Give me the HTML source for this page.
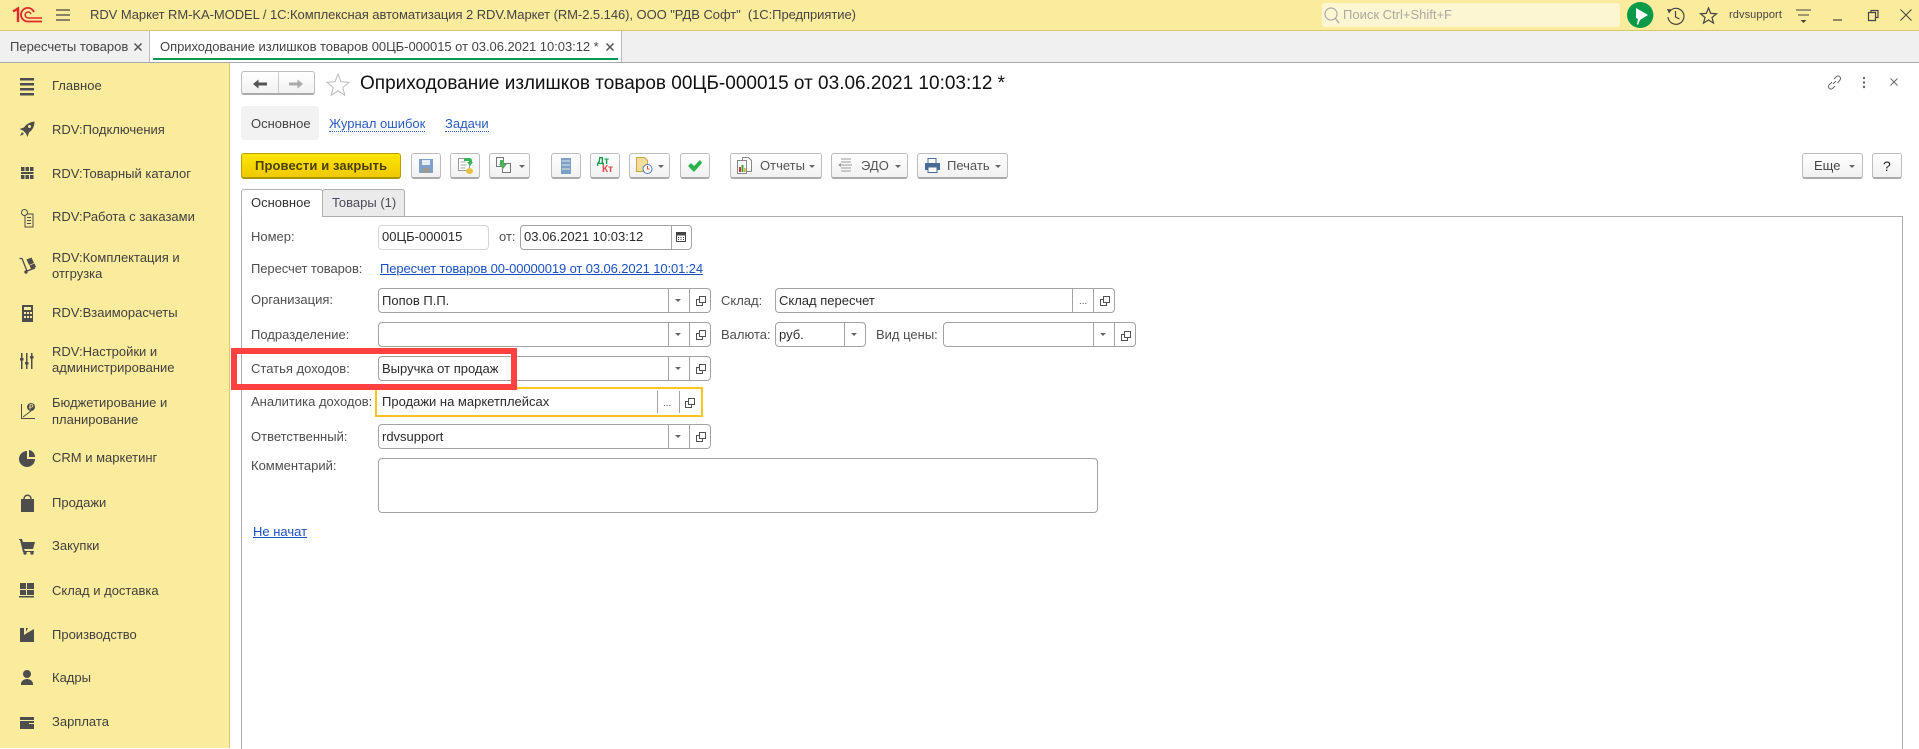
<!DOCTYPE html>
<html lang="ru"><head><meta charset="utf-8"><title>1C</title>
<style>
html,body{margin:0;padding:0;width:1919px;height:748px;overflow:hidden;background:#fff;font-family:"Liberation Sans","Noto Sans CJK SC",sans-serif;font-size:13px;color:#4a4a4a}
.a,.l,.s,.f,.b,.t{position:absolute;white-space:nowrap}
.a,.l,.s,.t{line-height:16px}
.l{left:251px;color:#4e4e4e}
.s{left:52px;color:#3f3f3f}
.f{box-sizing:border-box;height:25px;border:1px solid #a3a3a3;border-radius:4px;background:#fff}
.f i{position:absolute;top:0;bottom:0;width:1px;background:#a3a3a3}
.t{color:#2b2b2b}
.b{box-sizing:border-box;top:153px;height:26px;border:1px solid #bdbdbd;border-bottom:2px solid #aaa;border-radius:3px;background:linear-gradient(#fff,#f1f1f1)}
svg{position:absolute;overflow:visible}
a{color:#1448c4;text-decoration:underline}
</style></head><body>
<svg width="0" height="0" style="left:0;top:0"><defs>
<symbol id="c" viewBox="0 0 10 10" overflow="visible"><path d="M3.500.5h6v6h-6zM3.500 3.500H.5v6h6V6.500" fill="none" stroke="#505050" stroke-width="1"/></symbol>
<symbol id="d" viewBox="0 0 6 3"><path d="M0 0h6L3 3z" fill="#666"/></symbol>
</defs></svg>

<!-- top bar -->
<div class="a" style="left:0;top:0;width:1919px;height:30px;background:#fbec9d"></div>
<div class="a" style="left:0;top:30px;width:1919px;height:1px;background:#d8c869"></div>
<svg style="left:0;top:0" width="45" height="30" fill="none" stroke="#e1292b"><path d="M13 11.500l5-3V22" stroke-width="2.400"/><path d="M34 12a6.800 6.800 0 1 0-6 9.500H42" stroke-width="1.800"/><path d="M31 14a3 3 0 1 0-2.500 4H42" stroke-width="1.500"/></svg>
<svg style="left:56px;top:9px" width="15" height="12"><path d="M0 1h14M0 6h14M0 11h14" stroke="#444" stroke-width="1.2"/></svg>
<div class="a" style="left:90px;top:7px;color:#444;letter-spacing:-.06px">RDV Маркет RM-KA-MODEL / 1С:Комплексная автоматизация 2 RDV.Маркет (RM-2.5.146), ООО "РДВ Софт"&nbsp; (1С:Предприятие)</div>
<div class="a" style="left:1322px;top:3px;width:298px;height:24px;background:#fdf6d3;border-radius:3px"></div>
<svg style="left:1324px;top:7px" width="16" height="17"><circle cx="7" cy="7" r="6" fill="none" stroke="#aaa" stroke-width="1.2"/><path d="M11 11l4 5" stroke="#aaa" stroke-width="1.4"/></svg>
<div class="a" style="left:1343px;top:7px;color:#a9a9a0">Поиск Ctrl+Shift+F</div>
<svg style="left:1627px;top:2px" width="27" height="26"><ellipse cx="13.2" cy="13" rx="13.2" ry="13" fill="#0b9a4a"/><path d="M9 6l12 7-8 5-2 5-1-1 1-5-2-1z" fill="#fff"/></svg>
<svg style="left:1666px;top:6px" width="19" height="19"><path d="M4 5a8 8 0 1 1-2 6M9.5 5v6l4 2" fill="none" stroke="#444" stroke-width="1.2"/><path d="M1 3l5 .5-3 4z" fill="#444"/></svg>
<svg style="left:1700px;top:7px" width="18" height="17"><path d="M8.5 1l2.2 5.4 5.8.4-4.5 3.7 1.5 5.6-5-3.1-5 3.1 1.5-5.6L.5 6.8l5.8-.4z" fill="none" stroke="#444" stroke-width="1.2"/></svg>
<div class="a" style="left:1729px;top:7px;color:#444;font-size:11px;letter-spacing:.1px">rdvsupport</div>
<svg style="left:1796px;top:9px" width="16" height="15"><path d="M0 1h15M2 6h11" stroke="#444" stroke-width="1.1"/><path d="M4.500 11h6l-3 3z" fill="#444"/></svg>
<svg style="left:1833px;top:19px" width="10" height="3"><path d="M0 1h9" stroke="#444" stroke-width="1.2"/></svg>
<svg style="left:1868px;top:10px" width="11" height="11"><path d="M3 2.500V.5h7v7H8M.5 2.500h7v8h-7z" fill="none" stroke="#444" stroke-width="1.200"/></svg>
<svg style="left:1900px;top:9px" width="13" height="13"><path d="M.5.5l11 11M11.500.5l-11 11" stroke="#444" stroke-width="1"/></svg>

<!-- tab bar -->
<div class="a" style="left:0;top:31px;width:1919px;height:31px;background:#f0f0f0"></div>
<div class="a" style="left:0;top:62px;width:1919px;height:1px;background:#a8a8a8"></div>
<div class="a" style="left:150px;top:31px;width:471px;height:31px;background:#fff"></div>
<div class="a" style="left:149px;top:31px;width:1px;height:31px;background:#bbb"></div>
<div class="a" style="left:621px;top:31px;width:1px;height:31px;background:#bbb"></div>
<div class="a" style="left:153px;top:58px;width:465px;height:2px;background:#089a53"></div>
<div class="a" style="left:10px;top:39px;color:#444">Пересчеты товаров</div>
<svg style="left:134px;top:43px" width="8" height="8"><path d="M.5.5l7 7M7.500.5l-7 7" stroke="#555" stroke-width="1.500"/></svg>
<div class="a" style="left:160px;top:39px;color:#444;letter-spacing:-.04px">Оприходование излишков товаров 00ЦБ-000015 от 03.06.2021 10:03:12 *</div>
<svg style="left:606px;top:43px" width="8" height="8"><path d="M.5.5l7 7M7.500.5l-7 7" stroke="#555" stroke-width="1.500"/></svg>

<!-- sidebar -->
<div class="a" style="left:0;top:63px;width:229px;height:685px;background:#fbec9d;border-right:1px solid #d6c777"></div>
<div class="s" style="top:78px">Главное</div>
<div class="s" style="top:122px">RDV:Подключения</div>
<div class="s" style="top:166px">RDV:Товарный каталог</div>
<div class="s" style="top:209px">RDV:Работа с заказами</div>
<div class="s" style="top:250px">RDV:Комплектация и</div>
<div class="s" style="top:266px">отгрузка</div>
<div class="s" style="top:305px">RDV:Взаиморасчеты</div>
<div class="s" style="top:344px">RDV:Настройки и</div>
<div class="s" style="top:360px">администрирование</div>
<div class="s" style="top:395px">Бюджетирование и</div>
<div class="s" style="top:412px">планирование</div>
<div class="s" style="top:450px">CRM и маркетинг</div>
<div class="s" style="top:495px">Продажи</div>
<div class="s" style="top:538px">Закупки</div>
<div class="s" style="top:583px">Склад и доставка</div>
<div class="s" style="top:627px">Производство</div>
<div class="s" style="top:670px">Кадры</div>
<div class="s" style="top:714px">Зарплата</div>

<svg style="left:0;top:0" width="60" height="748" fill="#4d4d4d">
<path d="M20 78h14v2.500H20zM20 83h14v2.500H20zM20 88h14v2.500H20zM20 93h14v2.500H20z"/>
<path d="M34.500 121.500c-5 .5-8.500 3-10.500 6l-4.500 1.500 3.500 1.500 3 3 1.500 3.500 1.500-4.500c3-2 5.500-5.500 5.500-11zM22 132l2 2-4 2z"/><circle cx="29.500" cy="126.500" r="1.500" fill="#fbec9d"/>
<path d="M21 167h3.500v4H21zM25.500 167h3.500v4h-3.500zM30 167h3.500v4H30zM21 172h12.500v2H21zM21 175h3.500v4H21zM25.500 175h3.500v4h-3.500zM30 175h3.500v4H30z"/>
<path d="M25 214h8v13h-8z" fill="none" stroke="#4d4d4d"/><circle cx="24.500" cy="212.500" r="3" fill="#fbec9d" stroke="#4d4d4d"/><path d="M27 217h4v1h-4zM27 220h4v1h-4zM27 223h4v1h-4z"/>
<path d="M19.500 258.500h2.500l5 12.500 8-3" fill="none" stroke="#4d4d4d" stroke-width="1.300"/><path d="M26.500 259.500l5-2 2.500 5.500-5 2zM29.500 265.500l5-2 1.500 3.500-5 2z"/><circle cx="26" cy="272" r="1.700"/>
<path d="M22 305h11v17H22zM24 307v3h7v-3zM24 312v2h2v-2zM27 312v2h2v-2zM30 312v2h2v-2zM24 316v2h2v-2zM27 316v2h2v-2zM30 316v2h2v-2z" fill-rule="evenodd"/>
<path d="M21 353h1.500v16H21zM20 358h3.500v2.500H20zM26 353h1.500v16H26zM25 362h3.500v2.500H25zM31 353h1.500v16H31zM30 356h3.500v2.500H30z"/>
<path d="M21 404h1v14h13v1H21z"/><path d="M23 417l8-6" stroke="#4d4d4d" fill="none"/><circle cx="31" cy="407" r="4"/><path d="M30 409.500v-5h1.500a1.300 1.300 0 0 1 0 2.600H29" fill="none" stroke="#fbec9d" stroke-width=".8"/>
<path d="M27 451a8 8 0 1 0 8 8h-8z"/><path d="M29 450a7 7 0 0 1 6 7h-6z"/>
<path d="M21 499h13v13H21z"/><path d="M24 499c0-5 7-5 7 0" fill="none" stroke="#4d4d4d" stroke-width="1.500"/>
<path d="M19 539h3l1 3h12l-2 7H24l1 2h9v1H23l-3-12h-1z"/><circle cx="25" cy="553" r="1.700"/><circle cx="32" cy="553" r="1.700"/>
<path d="M20 583h6v6h-6zM27 583h7v6h-7zM20 590h6v5h-6zM27 590h7v5h-7zM19 596h15v1.500H19z"/>
<path d="M20 628h4v7l3-2 7-4v13H20z"/><path d="M26 628h2l-2 4z"/>
<circle cx="27" cy="674" r="4"/><path d="M21 684c0-3 3-5 6-5s6 2 6 5H21z"/><path d="M21 684h12v1H21z"/>
<path d="M20 717h14v3H20zM20 721h14v8H20z"/><path d="M29 723h5v1h-5z" fill="#fbec9d"/>
</svg>

<!-- form head -->
<div class="a" style="left:241px;top:71px;width:74px;height:24px;box-sizing:border-box;border:1px solid #bdbdbd;border-bottom:2px solid #aaa;border-radius:3px;background:linear-gradient(#fff,#f1f1f1)"></div>
<div class="a" style="left:278px;top:72px;width:1px;height:21px;background:#ccc"></div>
<svg style="left:253px;top:79px" width="15" height="10"><path d="M0 5l5.500-4.500v3H14v3H5.500v3z" fill="#555"/></svg>
<svg style="left:289px;top:79px" width="15" height="10"><path d="M14 5L8.500.5v3H0v3h8.500v3z" fill="#aaa"/></svg>
<svg style="left:326px;top:73px" width="24" height="22"><path d="M12 1l3 7.800 8 .5-6.200 5.200 2 7.800-6.800-4.400-6.800 4.400 2-7.800L1 9.300l8-.5z" fill="#fff" stroke="#bbb"/></svg>
<div class="a" style="left:360px;top:74px;font-size:19px;line-height:20px;color:#111">Оприходование излишков товаров 00ЦБ-000015 от 03.06.2021 10:03:12 *</div>
<svg style="left:1827px;top:75px" width="15" height="15"><path d="M6 9l3-3M5 7l-3 3a2.500 2.500 0 0 0 3.500 3.500L8 11M7 4l2.500-2.500A2.500 2.500 0 0 1 13 5l-2.500 3" fill="none" stroke="#666" stroke-width="1"/></svg>
<svg style="left:1862px;top:76px" width="4" height="13" fill="#666"><circle cx="2" cy="2" r="1.200"/><circle cx="2" cy="6.500" r="1.200"/><circle cx="2" cy="11" r="1.200"/></svg>
<svg style="left:1890px;top:78px" width="8" height="8"><path d="M.5.5l7 7M7.500.5l-7 7" stroke="#666" stroke-width="1"/></svg>

<div class="a" style="left:241px;top:106px;width:78px;height:34px;background:#f2f2f2;border-radius:3px"></div>
<div class="a" style="left:251px;top:116px;color:#444">Основное</div>
<div class="a" style="left:329px;top:116px;color:#2a5ac0;border-bottom:1px dotted #2a5ac0;line-height:15px">Журнал ошибок</div>
<div class="a" style="left:445px;top:116px;color:#2a5ac0;border-bottom:1px dotted #2a5ac0;line-height:15px">Задачи</div>

<!-- toolbar -->
<div class="b" style="left:241px;width:160px;background:linear-gradient(#ffe600,#f0c800);border:1px solid #b5a000;border-bottom:2px solid #a8950a"></div>
<div class="a" style="left:255px;top:158px;font-weight:bold;color:#4a4200;letter-spacing:.1px">Провести и закрыть</div>
<div class="b" style="left:411px;width:30px"></div>
<svg style="left:419px;top:159px" width="14" height="14"><path d="M0 0h14v14H0z" fill="#7ea1c9"/><path d="M3 1h8v5H3z" fill="#e6edf5"/><path d="M3 9h8v5H3z" fill="#9a9a9a"/></svg>
<div class="b" style="left:450px;width:30px"></div>
<svg style="left:458px;top:158px" width="15" height="16"><path d="M.5.5h8l3 3v9H.5z" fill="#fff" stroke="#999"/><path d="M2.500 4h5M2.500 7h6M2.500 10h5" stroke="#aaa"/><path d="M6 0h5c2 0 3 1 3 3v1h1l-3 4-3-4h2V3H6z" fill="#3cb55a"/><ellipse cx="11.500" cy="13" rx="3.500" ry="3" fill="#e8c23e"/></svg>
<div class="b" style="left:489px;width:41px"></div>
<svg style="left:496px;top:157px" width="16" height="17"><path d="M.5.5h7v9h-7z" fill="#fff" stroke="#777"/><path d="M6.500 6.500h8v9h-8z" fill="#fff" stroke="#777"/><path d="M4 3h4v4h3l-4 5-4-5h1z" fill="#4cb05a"/></svg>
<svg style="left:519px;top:165px" width="6" height="3"><use href="#d"/></svg>
<div class="b" style="left:551px;width:30px"></div>
<svg style="left:561px;top:158px" width="10" height="16"><path d="M0 0h10v16H0z" fill="#7e9fc4"/><path d="M1 3h8M1 7h8M1 11h8" stroke="#dfe8f2"/></svg>
<div class="b" style="left:590px;width:30px"></div>
<div class="a" style="left:597px;top:157px;font-size:10px;font-weight:bold;color:#109a48;line-height:10px">Дт</div>
<div class="a" style="left:602px;top:165px;font-size:10px;font-weight:bold;color:#e2454a;line-height:10px">Кт</div>
<div class="b" style="left:629px;width:41px"></div>
<svg style="left:636px;top:157px" width="17" height="17"><path d="M.5.5h8l3 3v11H.5z" fill="#f4dc9a" stroke="#c9a648"/><circle cx="11.500" cy="12" r="4.500" fill="#fff" stroke="#4d7bb5"/><path d="M11.500 9v3h2" stroke="#d44" fill="none"/></svg>
<svg style="left:658px;top:165px" width="6" height="3"><use href="#d"/></svg>
<div class="b" style="left:680px;width:30px"></div>
<svg style="left:688px;top:160px" width="14" height="12"><path d="M0 6l3-3 3 3 6-6 2 3-8 9z" fill="#29b24a"/></svg>
<div class="b" style="left:730px;width:92px"></div>
<svg style="left:737px;top:157px" width="16" height="18"><path d="M5.500.5h6l3 3v11h-9z" fill="#fff" stroke="#888"/><path d="M.5 3.500h9v13h-9z" fill="#fff" stroke="#888"/><path d="M2 10h2v5H2z" fill="#d33"/><path d="M4.500 8h2v7h-2z" fill="#3a3"/><path d="M7 11h1.500v4H7z" fill="#ca3"/></svg>
<div class="a" style="left:760px;top:158px;color:#555">Отчеты</div>
<svg style="left:809px;top:165px" width="6" height="3"><use href="#d"/></svg>
<div class="b" style="left:831px;width:77px"></div>
<svg style="left:838px;top:158px" width="15" height="15"><path d="M3 1h10M3 4h10M3 7h11M3 10h10M3 13h10" stroke="#999"/><path d="M0 7l3-2v4z" fill="#999"/></svg>
<div class="a" style="left:861px;top:158px;color:#555">ЭДО</div>
<svg style="left:895px;top:165px" width="6" height="3"><use href="#d"/></svg>
<div class="b" style="left:917px;width:91px"></div>
<svg style="left:925px;top:158px" width="15" height="15"><path d="M3 .5h8v5H3z" fill="#fff" stroke="#4a6c94"/><path d="M0 5h15v7H0z" fill="#4a6c94"/><path d="M3 9h9v5.500H3z" fill="#fff" stroke="#4a6c94"/></svg>
<div class="a" style="left:947px;top:158px;color:#555">Печать</div>
<svg style="left:995px;top:165px" width="6" height="3"><use href="#d"/></svg>
<div class="b" style="left:1802px;width:61px"></div>
<div class="a" style="left:1814px;top:158px;color:#444">Еще</div>
<svg style="left:1849px;top:165px" width="6" height="3"><use href="#d"/></svg>
<div class="b" style="left:1872px;width:30px"></div>
<div class="a" style="left:1883px;top:158px;color:#222;font-size:14px">?</div>

<!-- form tabs and panel -->
<div class="a" style="left:241px;top:216px;width:1660px;height:532px;box-sizing:content-box;border:1px solid #adadad;border-bottom:0;background:#fff"></div>
<div class="a" style="left:322px;top:189px;width:83px;height:27px;box-sizing:border-box;border:1px solid #b0b0b0;border-bottom:0;border-radius:3px 3px 0 0;background:#ebebeb"></div>
<div class="a" style="left:241px;top:189px;width:82px;height:28px;box-sizing:border-box;border:1px solid #b0b0b0;border-bottom:0;border-radius:3px 3px 0 0;background:#fff"></div>
<div class="a" style="left:251px;top:195px;color:#333">Основное</div>
<div class="a" style="left:332px;top:195px;color:#4a4a5a">Товары (1)</div>

<!-- fields -->
<div class="l" style="top:229px">Номер:</div>
<div class="f" style="left:378px;top:225px;width:111px;border-color:#d6d6d6"></div>
<div class="t" style="left:382px;top:229px">00ЦБ-000015</div>
<div class="a" style="left:499px;top:229px;color:#4e4e4e">от:</div>
<div class="f" style="left:520px;top:225px;width:172px"><i style="left:150px"></i></div>
<div class="t" style="left:524px;top:229px">03.06.2021 10:03:12</div>
<svg style="left:676px;top:232px" width="10" height="10"><path d="M.5.5h9v9h-9z" fill="#fff" stroke="#444"/><path d="M.5.5h9v3h-9z" fill="#444"/><path d="M2 5h1v1H2zM4.500 5h1v1h-1zM7 5h1v1H7zM2 7h1v1H2zM4.500 7h1v1h-1zM7 7h1v1H7z" fill="#444"/></svg>

<div class="l" style="top:261px;letter-spacing:-.07px">Пересчет товаров:</div>
<a class="a" style="left:380px;top:261px;color:#1b50c5;letter-spacing:-.11px">Пересчет товаров 00-00000019 от 03.06.2021 10:01:24</a>

<div class="l" style="top:292px">Организация:</div>
<div class="f" style="left:378px;top:288px;width:333px"><i style="left:289px"></i><i style="left:310px"></i></div>
<div class="t" style="left:382px;top:293px">Попов П.П.</div>
<svg style="left:675px;top:299px" width="6" height="3"><use href="#d"/></svg>
<svg style="left:696px;top:296px" width="10" height="10"><use href="#c"/></svg>

<div class="l" style="top:327px">Подразделение:</div>
<div class="f" style="left:378px;top:322px;width:333px"><i style="left:289px"></i><i style="left:310px"></i></div>
<svg style="left:675px;top:333px" width="6" height="3"><use href="#d"/></svg>
<svg style="left:696px;top:330px" width="10" height="10"><use href="#c"/></svg>

<div class="l" style="top:361px">Статья доходов:</div>
<div class="f" style="left:378px;top:356px;width:333px"><i style="left:289px"></i><i style="left:310px"></i></div>
<div class="t" style="left:382px;top:361px">Выручка от продаж</div>
<svg style="left:675px;top:367px" width="6" height="3"><use href="#d"/></svg>
<svg style="left:696px;top:364px" width="10" height="10"><use href="#c"/></svg>

<div class="l" style="top:394px">Аналитика доходов:</div>
<div class="f" style="left:375px;top:387px;width:328px;height:30px;border:2px solid #fcc61f;border-radius:0"><i style="left:280px;top:2px;bottom:2px"></i><i style="left:302px;top:2px;bottom:2px"></i></div>
<div class="t" style="left:382px;top:394px">Продажи на маркетплейсах</div>
<div class="a" style="left:663px;top:396px;color:#555;font-size:10px">...</div>
<svg style="left:685px;top:398px" width="10" height="10"><use href="#c"/></svg>

<div class="l" style="top:429px">Ответственный:</div>
<div class="f" style="left:378px;top:424px;width:333px"><i style="left:289px"></i><i style="left:310px"></i></div>
<div class="t" style="left:382px;top:429px">rdvsupport</div>
<svg style="left:675px;top:435px" width="6" height="3"><use href="#d"/></svg>
<svg style="left:696px;top:432px" width="10" height="10"><use href="#c"/></svg>

<div class="l" style="top:458px">Комментарий:</div>
<div class="f" style="left:378px;top:458px;width:720px;height:55px"></div>
<a class="a" style="left:253px;top:524px;color:#1b50c5">Не начат</a>

<div class="a" style="left:721px;top:293px;color:#4e4e4e">Склад:</div>
<div class="f" style="left:775px;top:288px;width:340px"><i style="left:296px"></i><i style="left:317px"></i></div>
<div class="t" style="left:779px;top:293px">Склад пересчет</div>
<div class="a" style="left:1079px;top:294px;color:#555;font-size:10px">...</div>
<svg style="left:1100px;top:296px" width="10" height="10"><use href="#c"/></svg>

<div class="a" style="left:721px;top:327px;color:#4e4e4e">Валюта:</div>
<div class="f" style="left:775px;top:322px;width:91px"><i style="left:68px"></i></div>
<div class="t" style="left:779px;top:327px">руб.</div>
<svg style="left:851px;top:333px" width="6" height="3"><use href="#d"/></svg>
<div class="a" style="left:876px;top:327px;color:#4e4e4e">Вид цены:</div>
<div class="f" style="left:943px;top:322px;width:193px"><i style="left:149px"></i><i style="left:170px"></i></div>
<svg style="left:1100px;top:333px" width="6" height="3"><use href="#d"/></svg>
<svg style="left:1121px;top:331px" width="10" height="10"><use href="#c"/></svg>

<!-- red highlight -->
<div class="a" style="left:231px;top:348px;width:286px;height:42px;box-sizing:border-box;border:6px solid #ff4141"></div>
</body></html>
